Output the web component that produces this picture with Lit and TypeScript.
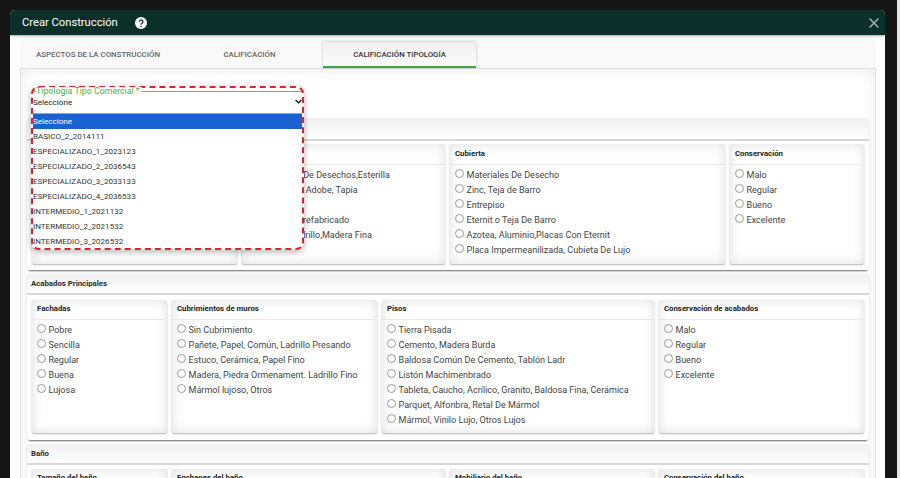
import { LitElement, html, css } from "lit";
import { customElement } from "lit/decorators.js";

interface Card { title: string; width: number; options: string[] }
interface Section { title: string; cards: Card[] }

const COND = ["Malo", "Regular", "Bueno", "Excelente"];

const SECTIONS: Section[] = [
  {
    title: "Estructura",
    cards: [
      { title: "Armazón", width: 205, options: ["Madera, Tapia", "Prefabricado", "Ladrillo, Bloque, Madera", "Concreto Hasta Tres Pisos", "Concreto Cuatro o Más Pisos"] },
      { title: "Muros", width: 203, options: ["Materiales De Desechos,Esterilla", "Bahareque, Adobe, Tapia", "Madera", "Concreto Prefabricado", "Bloque, Ladrillo,Madera Fina"] },
      { title: "Cubierta", width: 275, options: ["Materiales De Desecho", "Zinc, Teja de Barro", "Entrepiso", "Eternit o Teja De Barro", "Azotea, Aluminio,Placas Con Eternit", "Placa Impermeanilizada, Cubieta De Lujo"] },
      { title: "Conservación", width: 134, options: COND },
    ],
  },
  {
    title: "Acabados Principales",
    cards: [
      { title: "Fachadas", width: 135, options: ["Pobre", "Sencilla", "Regular", "Buena", "Lujosa"] },
      { title: "Cubrimientos de muros", width: 205, options: ["Sin Cubrimiento", "Pañete, Papel, Común, Ladrillo Presando", "Estuco, Cerámica, Papel Fino", "Madera, Piedra Ormenament. Ladrillo Fino", "Mármol lujoso, Otros"] },
      { title: "Pisos", width: 272, options: ["Tierra Pisada", "Cemento, Madera Burda", "Baldosa Común De Cemento, Tablón Ladr", "Listón Machimenbrado", "Tableta, Caucho, Acrílico, Granito, Baldosa Fina, Cerámica", "Parquet, Alfonbra, Retal De Mármol", "Mármol, Vinilo Lujo, Otros Lujos"] },
      { title: "Conservación de acabados", width: 205, options: COND },
    ],
  },
  {
    title: "Baño",
    cards: [
      { title: "Tamaño del baño", width: 135, options: [] },
      { title: "Enchapes del baño", width: 273, options: [] },
      { title: "Mobiliario del baño", width: 204, options: [] },
      { title: "Conservación del baño", width: 205, options: [] },
    ],
  },
];

const OPTIONS = ["Seleccione", "BASICO_2_2014111", "ESPECIALIZADO_1_2023123", "ESPECIALIZADO_2_2036543", "ESPECIALIZADO_3_2033133", "ESPECIALIZADO_4_2036533", "INTERMEDIO_1_2021132", "INTERMEDIO_2_2021532", "INTERMEDIO_3_2026532"];

@customElement("app-root")
export class AppRoot extends LitElement {
  static styles = css`
    :host { display: block; width: 900px; height: 478px; overflow: hidden; background: #161616; font-family: Roboto, "Liberation Sans", sans-serif; color: #333; position: relative; }
    .scrollbar { position: absolute; top: 0; right: 0; bottom: 0; width: 3px; background: #e4e4e4; }
    .modal { margin: 10px 0 0 10px; width: 875px; height: 468px; background: #fff; border-radius: 5px 5px 0 0; overflow: hidden; }
    .head { height: 25px; background: #0b3029; color: #fff; display: flex; align-items: center; padding: 0 6px 0 12px; box-shadow: 0 1px 2px rgba(0,0,0,.35); position: relative; }
    .head h1 { margin: 0; font-size: 11.2px; font-weight: 400; }
    .help { margin-left: 17px; width: 12px; height: 12px; display: block; }
    .close { margin-left: auto; width: 10px; height: 10px; display: block; }
    .tabs { margin: 2px 9px 0 10px; height: 32px; display: flex; background: #f9f9f9; padding-top: 5px; box-sizing: border-box; border-bottom: 1px solid #ddd; }
    .tab { font-size: 7.9px; font-weight: 500; color: #666; text-align: center; line-height: 25px; box-sizing: border-box; }
    .tab.first { width: 156px; }
    .tab.second { width: 147px; }
    .tab.active { width: 153px; height: 26px; background: linear-gradient(#f1f1f1, #fbfbfb); color: #333; border-bottom: 2px solid #43a047; box-shadow: 0 -1px 2px rgba(0,0,0,.1), 1px 0 2px rgba(0,0,0,.08), -1px 0 2px rgba(0,0,0,.08); font-size: 7.8px; }
    .panel { margin: 0 9px 0 10px; padding: 50px 6px 0; height: 420px; box-sizing: border-box; box-shadow: inset 0 0 14px rgba(0,0,0,.09); border-left: 1px solid #e2e2e2; border-right: 1px solid #e2e2e2; }
    .section { margin-bottom: 5px; border-radius: 3px; box-shadow: 0 3px 2px -2px #666, 0 0 2px rgba(0,0,0,.2); background: #fff; }
    .section.last { box-shadow: 0 0 2px rgba(0,0,0,.2); }
    .section h2 { margin: 0; font-size: 7.8px; font-weight: 700; color: #2a2a2a; padding-left: 4px; height: 20px; line-height: 17px; box-sizing: border-box; border-bottom: 2px solid #d8d8d8; background: linear-gradient(#f0f0f0, #fff); }
    .section.s1 h2 { height: 22px; line-height: 18px; }
    .row { display: flex; gap: 5px; padding: 5px 5px 7px; }
    .s1 .row { padding: 3px 5px 6px; }
    .s3 .row { padding-top: 4px; }
    .s1 .card { height: 120px; }
    .s2 .card { height: 133px; }
    .s3 .card { height: 60px; }
    .card { flex: none; box-sizing: border-box; border-radius: 2px; box-shadow: inset 0 0 12px rgba(0,0,0,.13), 0 1px 2px rgba(0,0,0,.3); background: #fff; overflow: hidden; }
    .card h3 { margin: 0; font-size: 7.8px; font-weight: 700; color: #222; height: 20px; line-height: 18px; padding-left: 5px; box-sizing: border-box; border-bottom: 1px solid #e8e8e8; }
    .s1 .card h3 { height: 21px; line-height: 20px; }
    .opts { padding: 2px 5px; }
    .opt { display: flex; align-items: center; height: 15px; font-size: 9.05px; color: #444; white-space: nowrap; overflow: hidden; }
    .radio { flex: none; width: 7px; height: 7px; border-radius: 50%; border: 1px solid #999; background: #fff; margin-right: 2.5px; position: relative; top: -1px; }
    .combo { position: absolute; left: 31px; top: 86px; width: 273px; height: 164px; box-sizing: border-box; border: 2px dashed #d7242f; border-radius: 8px; box-shadow: 0 2px 6px rgba(0,0,0,.3); background: #fff; }
    .field { height: 26px; position: relative; box-sizing: border-box; border-bottom: 1px solid #7fb5a8; }
    .legend { position: absolute; left: 3px; top: -1px; font-size: 8.8px; line-height: 9px; color: #4caf50; background: #fff; padding-right: 2px; }
    .line { position: absolute; left: 0; right: 0; top: 3px; height: 1px; background: #5cb85c; }
    .value { position: absolute; left: 0; top: 9px; font-size: 8.1px; line-height: 11px; color: #222; }
    .chev { position: absolute; right: 0; top: 11px; width: 7px; height: 5px; }
    .list { font-size: 8.05px; color: #333; }
    .item { height: 15px; line-height: 15px; }
    .item.sel { background: #1a62d2; color: #fff; }
  `;

  private renderCard(c: Card) {
    return html`<div class="card" style="width:${c.width}px">
      <h3>${c.title}</h3>
      <div class="opts">${c.options.map((o) => html`<div class="opt"><span class="radio"></span>${o}</div>`)}</div>
    </div>`;
  }

  render() {
    return html`
      <div class="scrollbar"></div>
      <div class="modal">
        <div class="head">
          <h1>Crear Construcción</h1>
          <svg class="help" viewBox="0 0 24 24"><circle cx="12" cy="12" r="12" fill="#fff"/><path d="M8.5 9.5a3.6 3.6 0 1 1 5.6 3c-1.3.9-2.1 1.4-2.1 3" fill="none" stroke="#0b3029" stroke-width="2.6"/><circle cx="12" cy="19" r="1.6" fill="#0b3029"/></svg>
          <svg class="close" viewBox="0 0 10 10"><path d="M.6.6l8.8 8.8M9.4.6L.6 9.4" stroke="#9fb8b2" stroke-width="1.4" fill="none"/></svg>
        </div>
        <div class="tabs">
          <div class="tab first">ASPECTOS DE LA CONSTRUCCIÓN</div>
          <div class="tab second">CALIFICACIÓN</div>
          <div class="tab active">CALIFICACIÓN TIPOLOGÍA</div>
        </div>
        <div class="panel">
          ${SECTIONS.map((s, i) => html`<div class="section s${i + 1} ${i === 2 ? "last" : ""}">
            <h2>${s.title}</h2>
            <div class="row">${s.cards.map((c) => this.renderCard(c))}</div>
          </div>`)}
        </div>
      </div>
      <div class="combo">
        <div class="field">
          <div class="line"></div>
          <div class="legend">Tipología Tipo Comercial *</div>
          <div class="value">Seleccione</div>
          <svg class="chev" viewBox="0 0 7 5"><path d="M.6 1l2.9 2.9L6.4 1" fill="none" stroke="#111" stroke-width="1.3"/></svg>
        </div>
        <div class="list">${OPTIONS.map((o, i) => html`<div class="item ${i === 0 ? "sel" : ""}">${o}</div>`)}</div>
      </div>
    `;
  }
}
